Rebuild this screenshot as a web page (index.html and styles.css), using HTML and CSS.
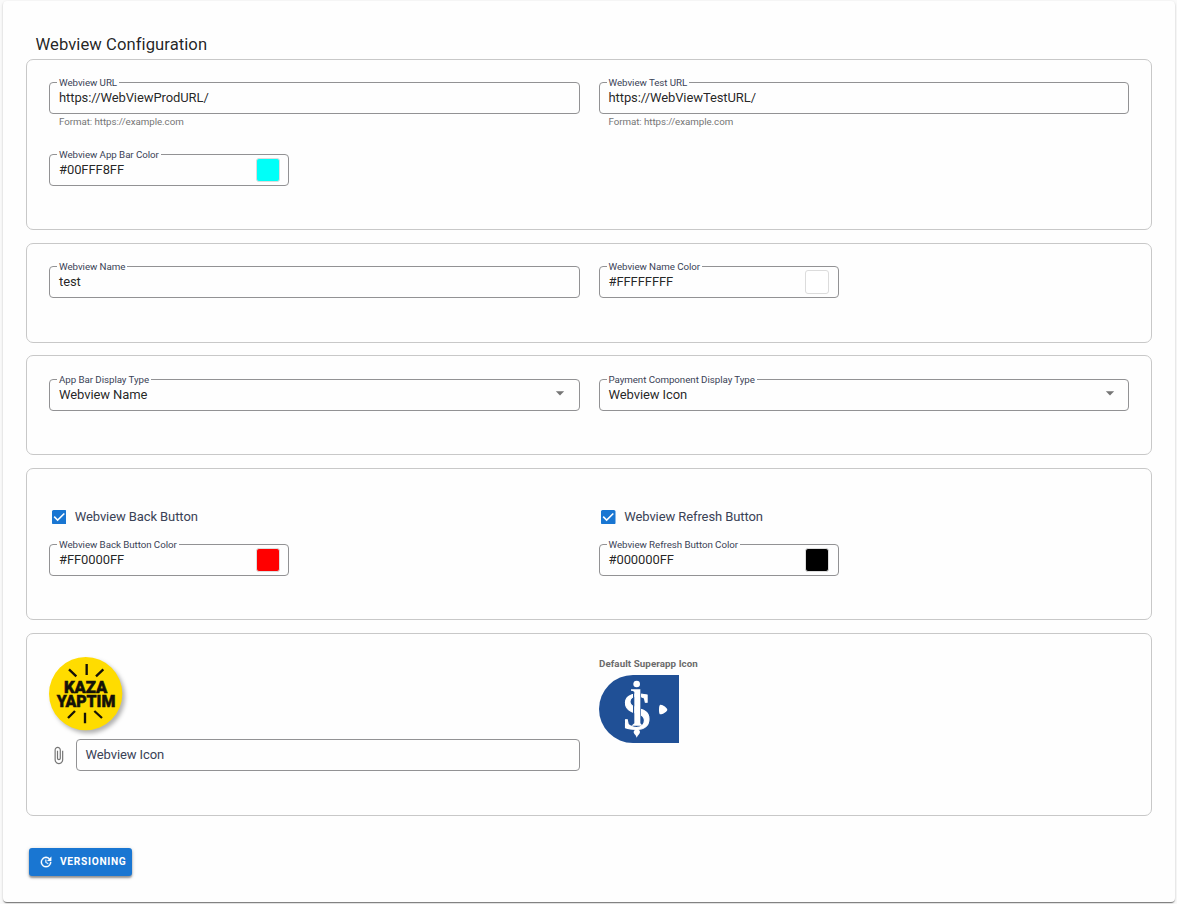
FILE: index.html
```html
<!DOCTYPE html>
<html lang="en">
<head>
<meta charset="utf-8">
<title>Webview Configuration</title>
<link rel="stylesheet" href="styles.css">
</head>
<body>
<main class="card">
  <h1 class="title">Webview Configuration</h1>

  <section class="panel panel-urls">
    <div class="cell">
      <div class="field"><label class="label">Webview URL</label><span class="value">https://WebViewProdURL/</span></div>
      <p class="helper">Format: https://example.com</p>
    </div>
    <div class="cell">
      <div class="field"><label class="label">Webview Test URL</label><span class="value">https://WebViewTestURL/</span></div>
      <p class="helper">Format: https://example.com</p>
    </div>
    <div class="cell">
      <div class="field field-color"><label class="label">Webview App Bar Color</label><span class="value">#00FFF8FF</span><span class="swatch cyan"></span></div>
    </div>
  </section>

  <section class="panel panel-name">
    <div class="cell">
      <div class="field"><label class="label">Webview Name</label><span class="value">test</span></div>
    </div>
    <div class="cell">
      <div class="field field-color"><label class="label">Webview Name Color</label><span class="value">#FFFFFFFF</span><span class="swatch white"></span></div>
    </div>
  </section>

  <section class="panel panel-display">
    <div class="cell">
      <div class="field"><label class="label">App Bar Display Type</label><span class="value">Webview Name</span><svg class="arrow" viewBox="0 0 24 24"><path d="M7 10l5 5 5-5z"/></svg></div>
    </div>
    <div class="cell">
      <div class="field"><label class="label">Payment Component Display Type</label><span class="value">Webview Icon</span><svg class="arrow" viewBox="0 0 24 24"><path d="M7 10l5 5 5-5z"/></svg></div>
    </div>
  </section>

  <section class="panel panel-buttons">
    <div class="cell">
      <div class="check"><svg class="box" viewBox="3 3 18 18"><path d="M19 3H5c-1.110 0-2 .9-2 2v14c0 1.100.89 2 2 2h14c1.110 0 2-.9 2-2V5c0-1.100-.89-2-2-2zm-9 14l-5-5 1.410-1.410L10 14.170l7.590-7.590L19 8l-9 9z"/></svg>Webview Back Button</div>
      <div class="field field-color"><label class="label">Webview Back Button Color</label><span class="value">#FF0000FF</span><span class="swatch red"></span></div>
    </div>
    <div class="cell">
      <div class="check"><svg class="box" viewBox="3 3 18 18"><path d="M19 3H5c-1.110 0-2 .9-2 2v14c0 1.100.89 2 2 2h14c1.110 0 2-.9 2-2V5c0-1.100-.89-2-2-2zm-9 14l-5-5 1.410-1.410L10 14.170l7.590-7.590L19 8l-9 9z"/></svg>Webview Refresh Button</div>
      <div class="field field-color"><label class="label">Webview Refresh Button Color</label><span class="value">#000000FF</span><span class="swatch black"></span></div>
    </div>
  </section>

  <section class="panel panel-icons">
    <div class="cell">
      <svg class="logo-kaza" viewBox="27 36 240 246">
        <circle class="kaza-disc" cx="137" cy="146" r="110"/>
        <path class="kaza-rays" d="M140 57v33M87 73l22 21M190 73l-22 21M135 203v32M105 198l-21 21M163 198l23 21"/>
        <text class="kaza-text" x="72" y="143" textLength="130" lengthAdjust="spacingAndGlyphs">KAZA</text>
        <text class="kaza-text" x="50" y="187" textLength="176" lengthAdjust="spacingAndGlyphs">YAPTIM</text>
      </svg>
      <div class="file-row">
        <svg class="clip" viewBox="0 0 24 24"><path d="M16.500 6v11.500c0 2.210-1.790 4-4 4s-4-1.790-4-4V5c0-1.380 1.120-2.500 2.500-2.500s2.500 1.120 2.500 2.500v10.500c0 .55-.45 1-1 1s-1-.45-1-1V6H10v9.500c0 1.380 1.120 2.500 2.500 2.500s2.500-1.120 2.500-2.500V5c0-2.210-1.790-4-4-4S7 2.790 7 5v12.500c0 3.040 2.460 5.500 5.500 5.500s5.500-2.460 5.500-5.500V6h-1.500z"/></svg>
        <div class="field field-file"><span class="value placeholder">Webview Icon</span></div>
      </div>
    </div>
    <div class="cell">
      <h2 class="caption">Default Superapp Icon</h2>
      <svg class="logo-app" viewBox="27 75 240 204">
        <path class="app-bg" d="M129 75H267V279H129A102 102 0 0 1 129 75Z"/>
        <text class="app-letter" x="95" y="237" textLength="92" lengthAdjust="spacingAndGlyphs">S</text>
        <path class="app-edge" d="M131 126V220M151 126V220"/>
        <path class="app-mark" d="M123 118h28v102l7 7h-34l9-7v-94q-3-4-10-4zM141 235c3 4 9 6 9 11 0 6-6 8-10 17-2-9-9-11-9-17 0-5 7-7 10-11zM210 165c6-3 22 9 22 14s-14 14-21 14q-4 0-4-14 0-12 3-14z"/>
        <circle class="app-mark" cx="140" cy="102" r="10"/>
      </svg>
    </div>
  </section>

  <button class="versioning" type="button"><svg class="update" viewBox="0 0 24 24"><path d="M21 10.120h-6.780l2.740-2.820c-2.730-2.700-7.150-2.800-9.880-.1-2.730 2.710-2.730 7.080 0 9.790s7.150 2.710 9.880 0C18.320 15.650 19 14.080 19 12.100h2c0 1.980-.88 4.550-2.640 6.290-3.510 3.480-9.210 3.480-12.720 0-3.500-3.470-3.530-9.110-.02-12.580s9.140-3.470 12.650 0L21 3v7.120zM12.500 8v4.250l3.500 2.080-.72 1.210L11 13V8h1.500z"/></svg><span class="versioning-text">VERSIONING</span></button>
</main>
</body>
</html>
```
FILE: styles.css
```css
* { box-sizing: border-box; }
body {
  margin: 0;
  padding: 1px 2px 2px 3px;
  height: 904px;
  background: #fafafa;
  font-family: Roboto, sans-serif;
  font-size: 13px;
  color: rgba(0, 0, 0, .87);
  overflow: hidden;
}
.card {
  height: 901px;
  padding: 34px 23px 0;
  background: #fefefe;
  border-radius: 4px;
  box-shadow: 0 2px 1px -1px rgba(0, 0, 0, .3), 0 1px 1px rgba(0, 0, 0, .24), 0 1px 3px rgba(0, 0, 0, .14);
}
.title {
  margin: 0;
  height: 24px;
  padding-left: 9.500px;
  font-size: 16.640px;
  font-weight: 400;
  line-height: 20px;
  letter-spacing: .06px;
}
.panel {
  display: grid;
  grid-template-columns: 530.500px 530.500px;
  column-gap: 19px;
  align-content: start;
  width: 1126px;
  padding: 22px;
  border: 1px solid #c8c8c8;
  border-radius: 7px;
}
.panel-urls { height: 171px; row-gap: 26px; margin-bottom: 13px; }
.panel-name { height: 100px; margin-bottom: 12px; }
.panel-display { height: 100px; padding-top: 23px; margin-bottom: 13px; }
.panel-buttons { height: 152px; padding-top: 38px; margin-bottom: 13px; }
.panel-icons { height: 183px; padding-top: 23px; margin-bottom: 32px; }
.field {
  position: relative;
  display: flex;
  align-items: center;
  height: 32px;
  padding: 0 9px;
  border: 1px solid #929294;
  border-radius: 4px;
}
.field-color { width: 240px; padding-right: 8px; }
.label {
  position: absolute;
  left: 7px;
  top: -7px;
  padding: 0 2px;
  background: #fefefe;
  font-size: 9.750px;
  line-height: 13px;
  letter-spacing: -.06px;
  color: #3a4256;
  white-space: nowrap;
}
.value {
  flex: 1;
  line-height: 18px;
  letter-spacing: -.09px;
  padding-bottom: 1px;
}
.placeholder { color: #3a4256; }
.field-file { padding-left: 8.500px; }
.helper {
  margin: 2px 0 0 10px;
  font-size: 9.750px;
  line-height: 12px;
  letter-spacing: -.06px;
  color: #757575;
}
.swatch {
  width: 24px;
  height: 24px;
  margin-right: .2px;
  border: 1px solid #dcdcdc;
  border-radius: 3px;
}
.cyan { background: #00fff8; }
.white { background: #fff; }
.red { background: #f00; }
.black { background: #000; }
.arrow { width: 20px; height: 20px; margin: -5px -.5px 0 0; fill: #757575; }
.check {
  display: flex;
  align-items: center;
  gap: 8.500px;
  height: 18px;
  margin-bottom: 19px;
  padding-left: 2.700px;
  letter-spacing: -.09px;
  color: #3a4256;
}
.box { width: 14.500px; height: 14.500px; margin-top: 1.500px; fill: #1976d2; }
.logo-kaza { display: block; width: 80px; height: 82px; overflow: visible; }
.kaza-disc { fill: #ffdc00; filter: drop-shadow(8px 9px 7px rgba(0, 0, 0, .3)); }
.kaza-rays { fill: none; stroke: #151208; stroke-width: 7; }
.kaza-text { font: 900 48px Roboto, sans-serif; fill: #151208; stroke: #151208; stroke-width: 1.500; }
.file-row { display: flex; align-items: center; }
.clip { width: 19px; height: 19px; margin: 1px 8px 0 0; fill: #757575; }
.field-file { flex: 1; }
.caption {
  margin: 1px 0 5px .5px;
  font-size: 9.750px;
  font-weight: 700;
  line-height: 12px;
  letter-spacing: .08px;
  color: #6b6b6b;
}
.logo-app { display: block; width: 80px; height: 68px; margin-left: .5px; }
.app-bg { fill: #205096; }
.app-edge { fill: none; stroke: #205096; stroke-width: 4; }
.app-mark { fill: #fff; }
.app-letter { font: 400 158px "Liberation Serif", serif; fill: #fff; stroke: #fff; stroke-width: 3; }
.versioning {
  display: flex;
  align-items: center;
  width: 103px;
  height: 28px;
  margin-left: 3px;
  padding: 0 0 0 9.500px;
  border: 0;
  border-radius: 3px;
  background: #1976d2;
  box-shadow: 0 2px 2px rgba(0, 0, 0, .34), 0 1px 4px rgba(0, 0, 0, .2);
  color: #fff;
  font: 700 10.200px Roboto, sans-serif;
  letter-spacing: .7px;
}
.versioning-text { padding-bottom: 1px; }
.update { width: 14px; height: 14px; margin-right: 7.500px; fill: #fff; stroke: #fff; stroke-width: .5; }
```
